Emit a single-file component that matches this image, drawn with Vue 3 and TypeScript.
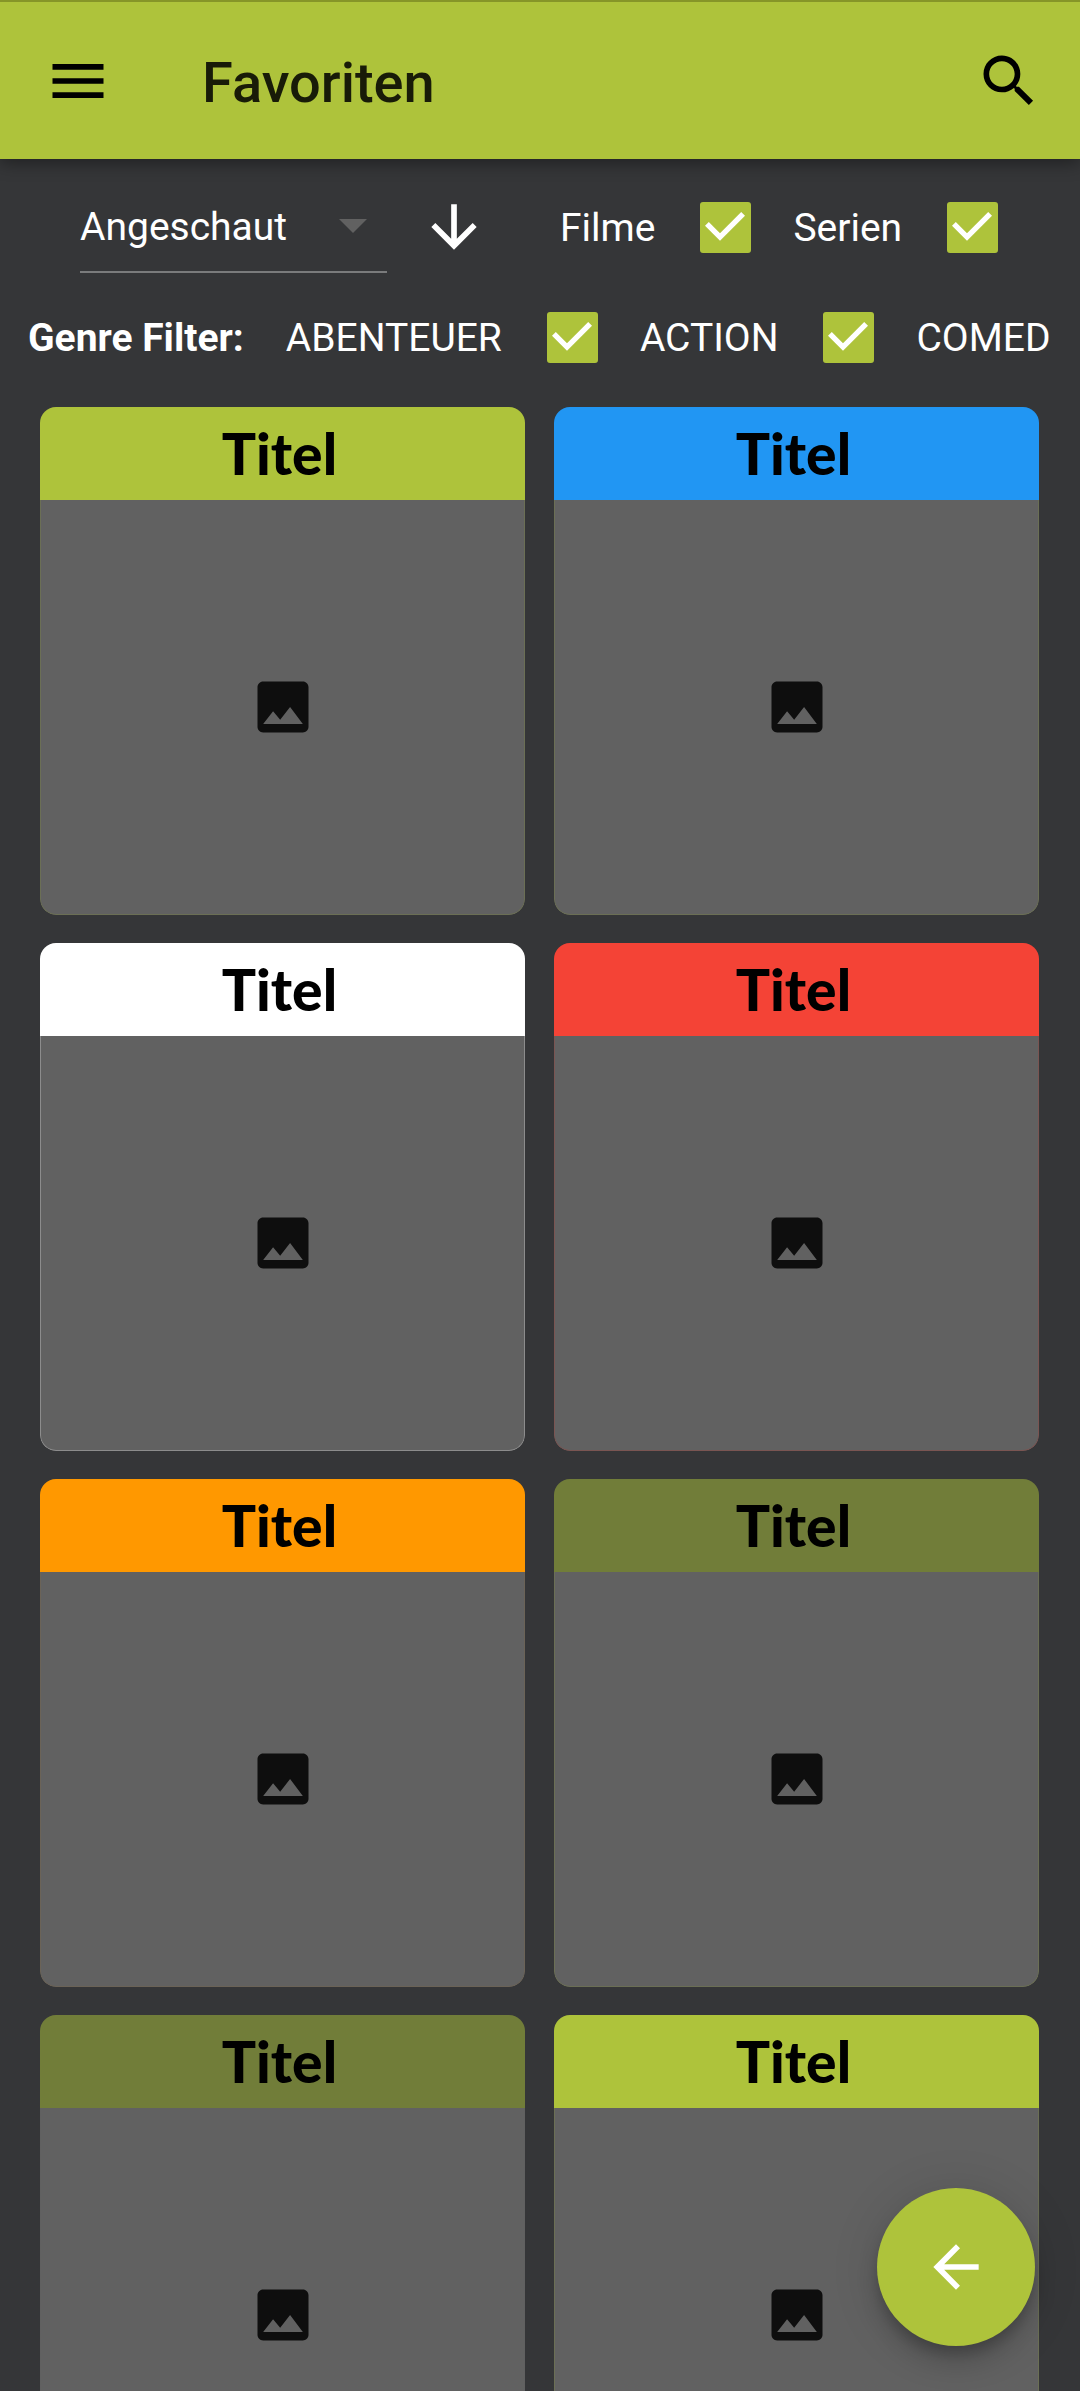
<script setup lang="ts">
import { ref } from 'vue'

interface Filter {
  id: string
  label: string
  checked: boolean
}

interface Card {
  id: number
  title: string
  color: string
  edge: string
}

const sort = ref('Angeschaut')
const sortOptions = ['Angeschaut', 'Titel', 'Bewertung']

const kinds = ref<Filter[]>([
  { id: 'filme', label: 'Filme', checked: true },
  { id: 'serien', label: 'Serien', checked: true },
])

const genres = ref<Filter[]>([
  { id: 'abenteuer', label: 'ABENTEUER', checked: true },
  { id: 'action', label: 'ACTION', checked: true },
  { id: 'comedy', label: 'COMED', checked: true },
])

const cards: Card[] = [
  { id: 1, title: 'Titel', color: '#aec33b', edge: '#6b6f55' },
  { id: 2, title: 'Titel', color: '#2196f3', edge: '#6b6f55' },
  { id: 3, title: 'Titel', color: '#ffffff', edge: '#8c8c8c' },
  { id: 4, title: 'Titel', color: '#f44336', edge: '#7a5552' },
  { id: 5, title: 'Titel', color: '#ff9800', edge: '#6b6357' },
  { id: 6, title: 'Titel', color: '#717d39', edge: '#6b6f55' },
  { id: 7, title: 'Titel', color: '#717d39', edge: '#606060' },
  { id: 8, title: 'Titel', color: '#aec33b', edge: '#6b6f55' },
]
</script>

<template>
  <div class="app">
    <header class="bar">
      <button class="icon-button" type="button" aria-label="Menü">
        <svg class="icon" viewBox="0 0 24 24"><path d="M3 18h18v-2H3v2zm0-5h18v-2H3v2zm0-7v2h18V6H3z" /></svg>
      </button>
      <h1>Favoriten</h1>
      <button class="icon-button" type="button" aria-label="Suche">
        <svg class="icon" viewBox="0 0 24 24"><path d="M15.5 14h-.79l-.28-.27C15.41 12.59 16 11.11 16 9.5 16 5.91 13.09 3 9.5 3S3 5.91 3 9.5 5.91 16 9.5 16c1.61 0 3.09-.59 4.23-1.57l.27.28v.79l5 4.99L20.49 19l-4.99-5zm-6 0C7.01 14 5 11.99 5 9.5S7.01 5 9.5 5 14 7.01 14 9.5 11.99 14 9.5 14z" /></svg>
      </button>
    </header>

    <main>
      <div class="row sort-row">
        <div class="select">
          <select v-model="sort" aria-label="Sortierung">
            <option v-for="o in sortOptions" :key="o">{{ o }}</option>
          </select>
          <svg class="caret" viewBox="0 0 28 14"><path d="M0 0h28L14 14z" /></svg>
        </div>
        <button class="icon-button" type="button" aria-label="Absteigend">
          <svg class="icon" viewBox="0 0 24 24"><path d="M20 12l-1.41-1.41L13 16.17V4h-2v12.17l-5.58-5.59L4 12l8 8 8-8z" /></svg>
        </button>
        <div class="kinds">
          <label v-for="k in kinds" :key="k.id" class="check">
            <span class="text">{{ k.label }}</span>
            <span class="box">
              <input v-model="k.checked" type="checkbox" />
              <svg viewBox="0 0 51 51"><path d="M5 23.8L20 38.8 45 13.800 41.200 10 20 31.200 8.800 20z" /></svg>
            </span>
          </label>
        </div>
      </div>

      <div class="row genre-row">
        <strong class="text">Genre Filter:</strong>
        <label v-for="g in genres" :key="g.id" class="check">
          <span class="text">{{ g.label }}</span>
          <span class="box">
            <input v-model="g.checked" type="checkbox" />
            <svg viewBox="0 0 51 51"><path d="M5 23.8L20 38.8 45 13.800 41.200 10 20 31.200 8.800 20z" /></svg>
          </span>
        </label>
      </div>

      <section class="grid">
        <article v-for="c in cards" :key="c.id" class="card">
          <h2 :style="{ background: c.color }">{{ c.title }}</h2>
          <div class="poster" :style="{ borderColor: c.edge }">
            <svg class="icon" viewBox="0 0 24 24"><path d="M21 19V5c0-1.100-.9-2-2-2H5c-1.100 0-2 .9-2 2v14c0 1.100.9 2 2 2h14c1.100 0 2-.9 2-2zM8.500 13.500l2.500 3.010L14.500 12l4.500 6H5l3.500-4.500z" /></svg>
          </div>
        </article>
      </section>
    </main>

    <button class="fab" type="button" aria-label="Zurück">
      <svg class="icon" viewBox="0 0 24 24"><path d="M20 11H7.830l5.590-5.590L12 4l-8 8 8 8 1.410-1.410L7.830 13H20v-2z" /></svg>
    </button>
  </div>
</template>

<style>
body {
  margin: 0;
  background: #353638;
}
</style>

<style scoped>
.app {
  display: flex;
  flex-direction: column;
  height: 100vh;
  overflow: hidden;
  background: #353638;
  color: #fff;
  font-family: Roboto, sans-serif;
  font-size: 39px;
  line-height: 48px;
}

button {
  padding: 0;
  border: 0;
  background: none;
  color: inherit;
  cursor: pointer;
}

.icon {
  display: block;
  width: 68px;
  height: 68px;
  fill: currentColor;
}

.icon-button {
  flex: none;
}

.bar {
  z-index: 1;
  flex: none;
  display: flex;
  align-items: center;
  box-sizing: border-box;
  height: 159px;
  padding: 0 37px 0 44px;
  border-top: 2px solid #869528;
  background: #aec33b;
  color: #000;
  box-shadow: 0 4px 16px rgba(0, 0, 0, 0.4);
}

h1 {
  flex: 1;
  margin: 0 0 0 90px;
  padding-top: 4px;
  color: #181b08;
  font-size: 56px;
  font-weight: 500;
  line-height: 64px;
}

main {
  flex: 1;
  min-height: 0;
  overflow-y: auto;
  scrollbar-width: none;
}

.row {
  display: flex;
  align-items: center;
}

.text {
  padding-top: 2px;
}

.sort-row {
  padding: 22px 80px 0;
}

.select {
  display: grid;
  align-items: center;
  flex: none;
  width: 307px;
  margin-right: 33px;
  border-bottom: 2px solid #7a7b7c;
}

.select > * {
  grid-area: 1 / 1;
}

select {
  appearance: none;
  width: 100%;
  height: 90px;
  padding: 2px 0 0;
  border: 0;
  background: none;
  color: inherit;
  font: inherit;
}

option {
  color: #000;
}

.caret {
  justify-self: end;
  width: 28px;
  height: 14px;
  margin-right: 20px;
  fill: #616161;
  pointer-events: none;
}

.kinds {
  display: flex;
  gap: 42px;
  margin-left: 72px;
}

.check {
  display: flex;
  flex: none;
  align-items: center;
  gap: 45px;
}

.box {
  display: grid;
  width: 51px;
  height: 51px;
}

.box > * {
  grid-area: 1 / 1;
}

.box input {
  appearance: none;
  width: 51px;
  height: 51px;
  margin: 0;
  border: 5px solid #aec33b;
  border-radius: 3px;
}

.box input:checked {
  background: #aec33b;
}

.box svg {
  visibility: hidden;
  fill: #fff;
  pointer-events: none;
}

.box input:checked + svg {
  visibility: visible;
}

.genre-row {
  gap: 42px;
  height: 70px;
  margin: 29px 28px 35px;
  overflow-x: auto;
  scrollbar-width: none;
  white-space: nowrap;
}

.grid {
  display: grid;
  grid-template-columns: 1fr 1fr;
  gap: 28px 29px;
  padding: 0 41px 28px 40px;
}

.card {
  border-radius: 16px;
  overflow: hidden;
}

h2 {
  margin: 0;
  padding: 11px 6px 12px 0;
  color: #000;
  font-family: Lato, sans-serif;
  font-size: 57px;
  font-weight: 900;
  line-height: 70px;
  text-align: center;
}

.poster {
  display: flex;
  align-items: center;
  justify-content: center;
  box-sizing: border-box;
  height: 415px;
  border: 1px solid;
  border-top: 0;
  border-radius: 0 0 16px 16px;
  background: #616161;
  color: #0e0e0e;
}

.fab {
  position: fixed;
  z-index: 2;
  right: 45px;
  bottom: 45px;
  display: flex;
  align-items: center;
  justify-content: center;
  width: 158px;
  height: 158px;
  border-radius: 50%;
  background: #aec33b;
  box-shadow: 0 10px 14px -3px rgba(0, 0, 0, 0.2), 0 17px 28px rgba(0, 0, 0, 0.14), 0 3px 50px rgba(0, 0, 0, 0.12);
}
</style>
